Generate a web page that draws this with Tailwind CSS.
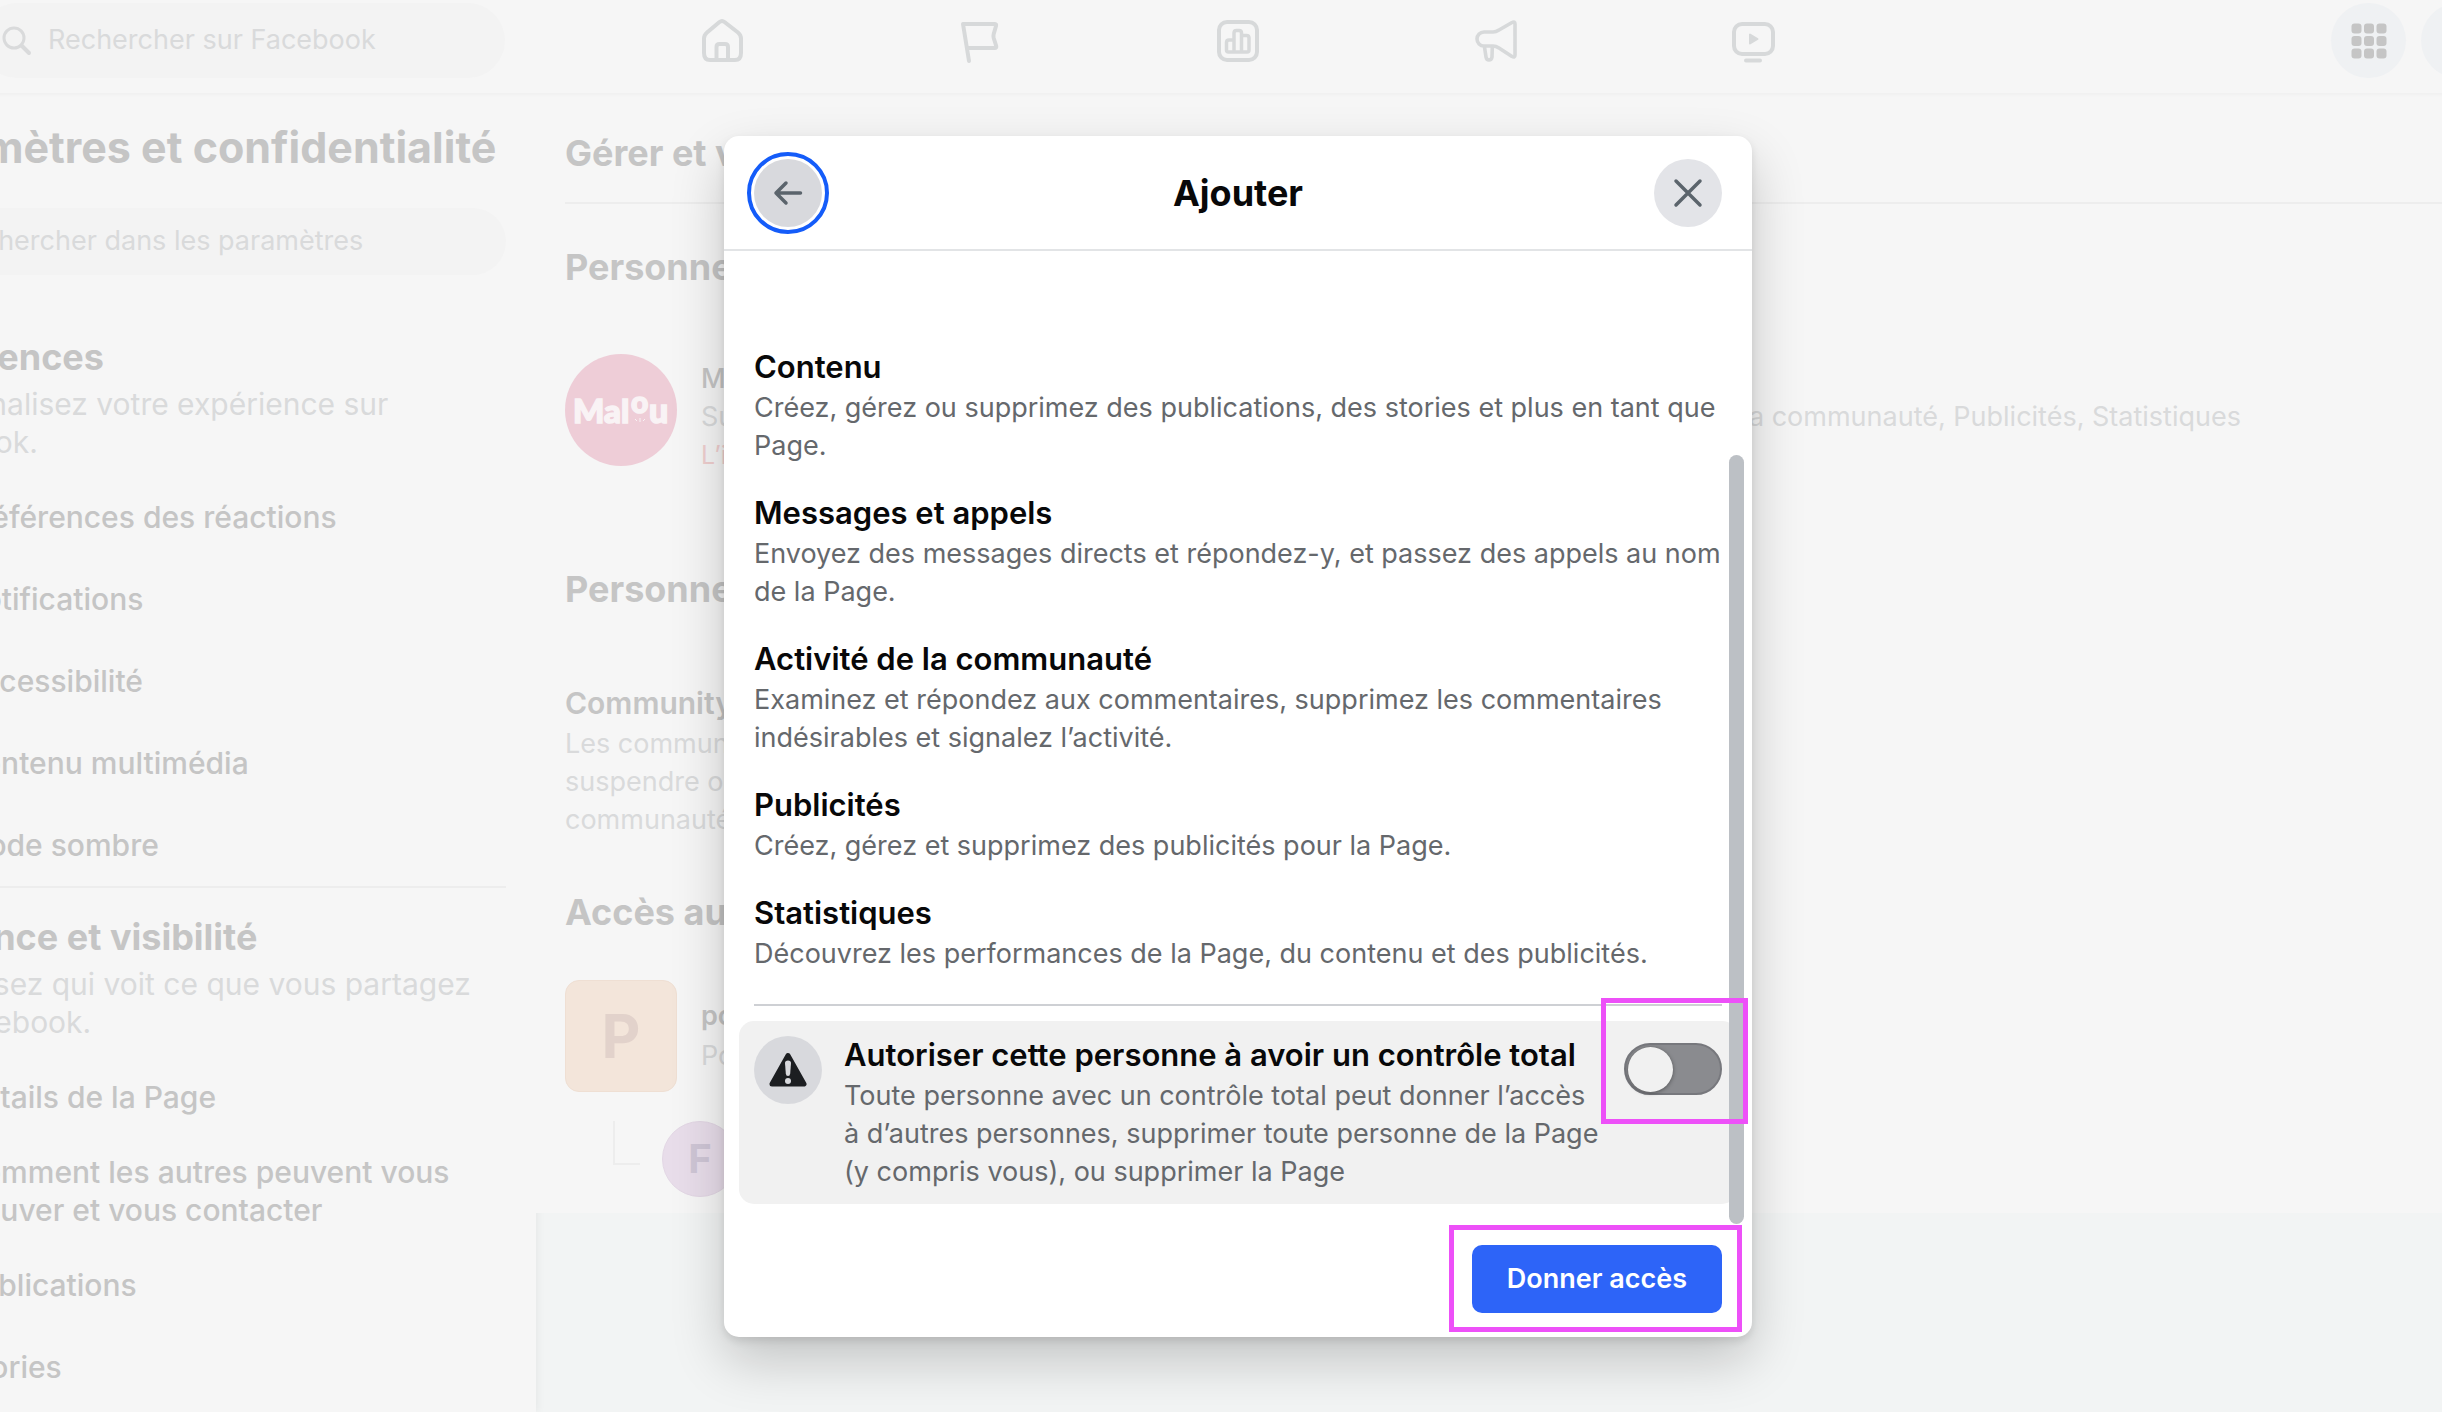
<!DOCTYPE html>
<html lang="fr">
<head>
    <meta charset="UTF-8">
    <meta name="viewport" content="width=device-width, initial-scale=1.0">
    <title>Accès à la Page</title>
    <script src="https://cdn.jsdelivr.net/npm/@tailwindcss/browser@4"></script>
</head>
<body class="bg-[#f2f4f4] font-['Inter',sans-serif] overflow-hidden">
<div class="relative -ml-[140px] -mr-[174px] min-h-screen flex flex-col">

    <!-- Barre du haut -->
    <header class="relative grid grid-cols-[1fr_1290px_1fr] items-start h-[93px] px-[30px] pt-[3px] bg-[#f6f6f6] shadow-[0_1px_5px_#0000000a]">
        <label class="flex items-center gap-4 h-[75px] w-[525px] ml-[90px] pl-[20px] rounded-full bg-[#f3f3f3]">
            <svg class="w-8 h-8 shrink-0" viewBox="0 0 32 32" fill="none" stroke="#d9dadb" stroke-width="3" stroke-linecap="round"><circle cx="14" cy="13" r="10"/><path d="M21.500 20.500 29 28" stroke-width="4"/></svg>
            <input type="search" aria-label="Rechercher sur Facebook" placeholder="Rechercher sur Facebook" class="flex-1 min-w-0 bg-transparent text-[27px] placeholder:text-[#d9dadb] outline-none">
        </label>
        <nav class="grid grid-cols-5 h-[75px] items-center justify-items-center">
            <a href="#" aria-label="Accueil"><svg class="w-12 h-12" viewBox="0 0 48 48" fill="none" stroke="#d7d9da" stroke-width="4" stroke-linejoin="round"><path d="M21.500 5a4 4 0 0 1 5 0L40 15.500q3 2.500 3 6V36q0 7-6 7H12q-6 0-6-7V21.500q0-3.500 3-6z"/><path d="M18.500 43V30q0-3 3-3h5.500q3 0 3 3v13"/></svg></a>
            <a href="#" aria-label="Pages"><svg class="w-12 h-12" viewBox="0 0 48 48" fill="none" stroke="#d7d9da" stroke-width="4" stroke-linecap="round" stroke-linejoin="round"><path d="M13 44 7 7h32q1.500 0 1 2l-2.300 8q-.5 2 0 4l2.500 8q.5 2-1.500 2H11"/></svg></a>
            <a href="#" aria-label="Statistiques"><svg class="w-12 h-12" viewBox="0 0 48 48" fill="none" stroke="#d7d9da" stroke-width="4" stroke-linejoin="round"><rect x="5" y="5" width="38" height="38" rx="8"/><path stroke-width="3.500" d="M20 35V23h-5q-2.500 0-2.500 2.500V33q0 2 2 2h18.500q2 0 2-2V21q0-2.500-2.500-2.500h-5M20 35V16q0-2.500 2.500-2.500H25q2.500 0 2.500 2.500v19"/></svg></a>
            <a href="#" aria-label="Publicités"><svg class="w-12 h-12" viewBox="0 0 48 48" fill="none" stroke="#d7d9da" stroke-width="3.600" stroke-linejoin="round" stroke-linecap="round"><path d="M12 15h9q3 0 6-2L40 5.500q3-1.500 3 1.500v31q0 3-3 1.500L27 31q-3-2-6-2h-9a7 7 0 0 1 0-14z"/><path d="M12.500 30 14 40q.5 3 3 3t3-3l.3-10"/></svg></a>
            <a href="#" aria-label="Vidéos"><svg class="w-12 h-12" viewBox="0 0 48 48" fill="none" stroke="#d7d9da" stroke-width="4" stroke-linejoin="round" stroke-linecap="round"><rect x="4" y="7" width="39" height="30" rx="8"/><path d="M16 43.500h14"/><path d="M20 17.500v9l7.500-4.500z" fill="#d7d9da" stroke-width="2"/></svg></a>
        </nav>
        <div class="flex justify-end gap-[15px]">
            <button type="button" aria-label="Menu" class="grid place-items-center size-[75px] rounded-full bg-[#eff1f3]">
                <svg class="w-9 h-9" viewBox="0 0 36 36" fill="#c5c5c5"><rect x="0.500" y="0.500" width="10" height="10" rx="3"/><rect x="13" y="0.500" width="10" height="10" rx="3"/><rect x="25.500" y="0.500" width="10" height="10" rx="3"/><rect x="0.500" y="13" width="10" height="10" rx="3"/><rect x="13" y="13" width="10" height="10" rx="3"/><rect x="25.500" y="13" width="10" height="10" rx="3"/><rect x="0.500" y="25.500" width="10" height="10" rx="3"/><rect x="13" y="25.500" width="10" height="10" rx="3"/><rect x="25.500" y="25.500" width="10" height="10" rx="3"/></svg>
            </button>
            <button type="button" aria-label="Messenger" class="size-[75px] rounded-full bg-[#eff1f3]"></button>
            <button type="button" aria-label="Notifications" class="size-[75px] rounded-full bg-[#eff1f3]"></button>
        </div>
    </header>

    <div class="flex flex-1">
        <!-- Menu des paramètres -->
        <aside class="w-[676px] shrink-0 px-[30px] bg-[#f6f6f6] text-[#c5c5c5] shadow-[2px_0_8px_#0000000d]">
            <h1 class="mt-[29px] text-[43px] leading-[50px] font-bold whitespace-nowrap">Paramètres et confidentialité</h1>
            <label class="flex items-center h-[67px] mt-[36px] pl-[60px] rounded-full bg-[#f3f3f3]">
                <input type="search" aria-label="Rechercher dans les paramètres" placeholder="Rechercher dans les paramètres" class="flex-1 min-w-0 bg-transparent text-[27px] placeholder:text-[#d9dadb] outline-none">
            </label>
            <section class="mt-[60px] border-b-2 border-[#ededed]">
                <h2 class="text-[36px] leading-[44px] font-bold">Préférences</h2>
                <p class="mt-[6px] text-[30px] leading-[38px] text-[#d9dadb]">Personnalisez votre expérience sur Facebook.</p>
                <ul class="mt-[15px] pl-[71px] text-[30px] leading-[38px] font-medium whitespace-nowrap">
                    <li class="flex items-center min-h-[82px]"><a href="#">Préférences des réactions</a></li>
                    <li class="flex items-center min-h-[82px]"><a href="#">Notifications</a></li>
                    <li class="flex items-center min-h-[82px]"><a href="#">Accessibilité</a></li>
                    <li class="flex items-center min-h-[82px]"><a href="#">Contenu multimédia</a></li>
                    <li class="flex items-center min-h-[82px]"><a href="#">Mode sombre</a></li>
                </ul>
            </section>
            <section class="mt-[27px]">
                <h2 class="text-[36px] leading-[44px] font-bold">Audience et visibilité</h2>
                <p class="mt-[6px] text-[30px] leading-[38px] text-[#d9dadb]">Choisissez qui voit ce que vous partagez sur Facebook.</p>
                <ul class="mt-[15px] pl-[71px] text-[30px] leading-[38px] font-medium">
                    <li class="flex items-center min-h-[82px]"><a href="#">Détails de la Page</a></li>
                    <li class="flex items-center min-h-[82px] py-[15px]"><a href="#">Comment les autres peuvent vous trouver et vous contacter</a></li>
                    <li class="flex items-center min-h-[82px]"><a href="#">Publications</a></li>
                    <li class="flex items-center min-h-[82px]"><a href="#">Stories</a></li>
                </ul>
            </section>
        </aside>

        <!-- Accès à la Page -->
        <main class="flex-1 min-w-0 self-start pb-[16px] pl-[29px] bg-[#f6f6f6] text-[#c5c5c5] whitespace-nowrap">
            <h2 class="pt-[38px] pb-[27px] border-b-2 border-[#ededed] text-[36px] leading-[44px] font-bold">Gérer et voir les accès</h2>
            <h3 class="mt-[41px] text-[36px] leading-[44px] font-bold">Personnes avec accès</h3>
            <div class="flex items-center gap-6 mt-[65px] h-[112px]">
                <svg class="size-[112px] shrink-0" viewBox="0 0 112 112" role="img" aria-label="Malou">
                    <circle cx="56" cy="56" r="56" fill="#eecdd7"/>
                    <g fill="#f9f3f5" stroke="#f9f3f5" stroke-width="1.500" font-family="Lato, sans-serif" font-weight="900">
                        <text x="8" y="69" font-size="33">Mal</text><text x="66" y="59" font-size="30">o</text><text x="84" y="69" font-size="34">u</text>
                        <path d="M70 65l2 2M75 64v4M80 65l-2 2" stroke-width="1"/>
                    </g>
                </svg>
                <div class="flex-1 pt-[14px] leading-[38px]">
                    <p class="text-[27px] font-medium">Malou</p>
                    <p class="flex justify-between max-w-[1540px] text-[27px] text-[#d9dadb]"><span>Sur Facebook</span><span>Activité de la communauté, Publicités, Statistiques</span></p>
                    <p class="text-[25px] text-[#f0cfcf]">L’invitation expire bientôt</p>
                </div>
            </div>
            <h3 class="mt-[101px] text-[36px] leading-[44px] font-bold">Personnes avec accès aux tâches</h3>
            <h4 class="mt-[73px] text-[30px] leading-[38px] font-semibold">Community managers</h4>
            <p class="mt-[3px] text-[27px] leading-[38px] text-[#d9dadb]">Les community managers peuvent<br>suspendre ou supprimer<br>communautés</p>
            <h3 class="mt-[51px] text-[36px] leading-[44px] font-bold">Accès aux comptes</h3>
            <div class="flex items-center gap-6 mt-[46px]">
                <div class="grid place-items-center size-[112px] rounded-[14px] border border-[#efdfd3] bg-[#f3e5da] text-[#e2d2cb] text-[60px] font-bold">P</div>
                <div class="text-[27px] leading-10">
                    <p class="font-semibold">portfolio</p>
                    <p class="text-[#d9dadb]">Portfolio business</p>
                </div>
            </div>
            <div class="flex gap-[22px] mt-[29px] ml-[48px]">
                <span class="w-[27px] h-[44px] border-l-2 border-b-2 border-[#ededed]"></span>
                <span class="grid place-items-center size-[76px] rounded-full border border-[#e3d7e5] bg-[#e8ddea] text-[#cfc6d6] text-[40px] font-bold">F</span>
            </div>
        </main>
    </div>

    <!-- Boîte de dialogue -->
    <div class="absolute inset-x-0 top-0 flex justify-center pt-[136px]">
        <div role="dialog" aria-labelledby="dialogTitle" class="relative w-[1028px] bg-white rounded-[15px] shadow-[0_23px_53px_#00000033,0_4px_8px_#0000001a]">
            <div class="flex items-center justify-between h-[115px] px-[30px] border-b-2 border-[#e2e4e6]">
                <button type="button" aria-label="Retour" class="grid place-items-center size-[68px] rounded-full bg-[#d8d9dd] outline-4 outline-offset-3 outline-[#145cf9]">
                    <svg class="w-8 h-8" viewBox="0 0 32 32" fill="none" stroke="#5b646c" stroke-width="3.500" stroke-linecap="round" stroke-linejoin="round"><path d="M28.500 16H4M14 6 4 16l10 10"/></svg>
                </button>
                <h2 id="dialogTitle" class="text-[36px] leading-[44px] font-bold text-[#080809]">Ajouter</h2>
                <button type="button" aria-label="Fermer" class="grid place-items-center size-[68px] rounded-full bg-[#e3e4e8]">
                    <svg class="w-8 h-8" viewBox="0 0 32 32" fill="none" stroke="#5b646c" stroke-width="3.500" stroke-linecap="round"><path d="M4 4l24 24M28 4 4 28"/></svg>
                </button>
            </div>

            <div class="relative px-[30px] pt-[97px] pb-[20px]">
                <div class="flex flex-col gap-[29px] text-[27px] leading-[38px] text-[#65686c]">
                    <section>
                        <h3 class="mb-[3px] text-[31px] font-semibold text-[#080809]">Contenu</h3>
                        <p>Créez, gérez ou supprimez des publications, des stories et plus en tant que Page.</p>
                    </section>
                    <section>
                        <h3 class="mb-[3px] text-[31px] font-semibold text-[#080809]">Messages et appels</h3>
                        <p>Envoyez des messages directs et répondez-y, et passez des appels au nom de la Page.</p>
                    </section>
                    <section>
                        <h3 class="mb-[3px] text-[31px] font-semibold text-[#080809]">Activité de la communauté</h3>
                        <p>Examinez et répondez aux commentaires, supprimez les commentaires indésirables et signalez l’activité.</p>
                    </section>
                    <section>
                        <h3 class="mb-[3px] text-[31px] font-semibold text-[#080809]">Publicités</h3>
                        <p>Créez, gérez et supprimez des publicités pour la Page.</p>
                    </section>
                    <section>
                        <h3 class="mb-[3px] text-[31px] font-semibold text-[#080809]">Statistiques</h3>
                        <p>Découvrez les performances de la Page, du contenu et des publicités.</p>
                    </section>
                </div>
                <hr class="mt-[31px] border-t-2 border-[#ced0d4]">
                <div class="flex items-start mt-[15px] -mx-[15px] px-[15px] pt-[15px] pb-[13px] rounded-[15px] bg-[#f1f1f1]">
                    <span class="grid place-items-center size-[68px] shrink-0 rounded-full bg-[#d8d9dd]">
                        <svg class="w-10 h-10" viewBox="0 0 40 40"><path d="M20 5.500 36 34H4z" fill="#1c1e21" stroke="#1c1e21" stroke-width="5" stroke-linejoin="round"/><path d="M17 13q0-2.500 3-2.500t3 2.500l-.8 10.500q-.2 2.500-2.200 2.500t-2.200-2.500z" fill="#d8d9dd"/><circle cx="20" cy="31" r="3" fill="#d8d9dd"/></svg>
                    </span>
                    <div class="flex-1 pl-[22px] text-[27px] leading-[38px] text-[#65686c]">
                        <label for="fullControl" class="block mb-[3px] text-[31px] font-semibold text-[#080809] whitespace-nowrap">Autoriser cette personne à avoir un contrôle total</label>
                        <p>Toute personne avec un contrôle total peut donner l’accès à d’autres personnes, supprimer toute personne de la Page (y compris vous), ou supprimer la Page</p>
                    </div>
                    <div class="relative ml-[22px] mt-[7px]">
                        <input type="checkbox" role="switch" id="fullControl" class="block appearance-none w-[98px] h-[52px] p-[2px] rounded-full border-2 border-[#77787d] bg-[#8a8b8f] before:block before:size-[45px] before:rounded-full before:bg-[#f1f1f1] before:shadow-[0_1px_4px_#00000066]">
                        <span class="absolute z-10 -top-[45px] -bottom-[29px] -left-[23px] -right-[26px] border-5 border-[#ed50f8] pointer-events-none"></span>
                    </div>
                </div>
                <div class="absolute top-[204px] bottom-0 right-[8px] w-[15px] rounded-full bg-[#bcc0c5]"></div>
            </div>

            <div class="flex justify-end px-[30px] pt-[21px] pb-[24px]">
                <div class="relative">
                    <button type="button" class="h-[68px] px-[35px] rounded-[10px] bg-[#2d64f8] text-white text-[27px] font-semibold">Donner accès</button>
                    <span class="absolute -top-[20px] -bottom-[19px] -left-[23px] -right-[20px] border-5 border-[#ed50f8] pointer-events-none"></span>
                </div>
            </div>
        </div>
    </div>
</div>
</body>
</html>
